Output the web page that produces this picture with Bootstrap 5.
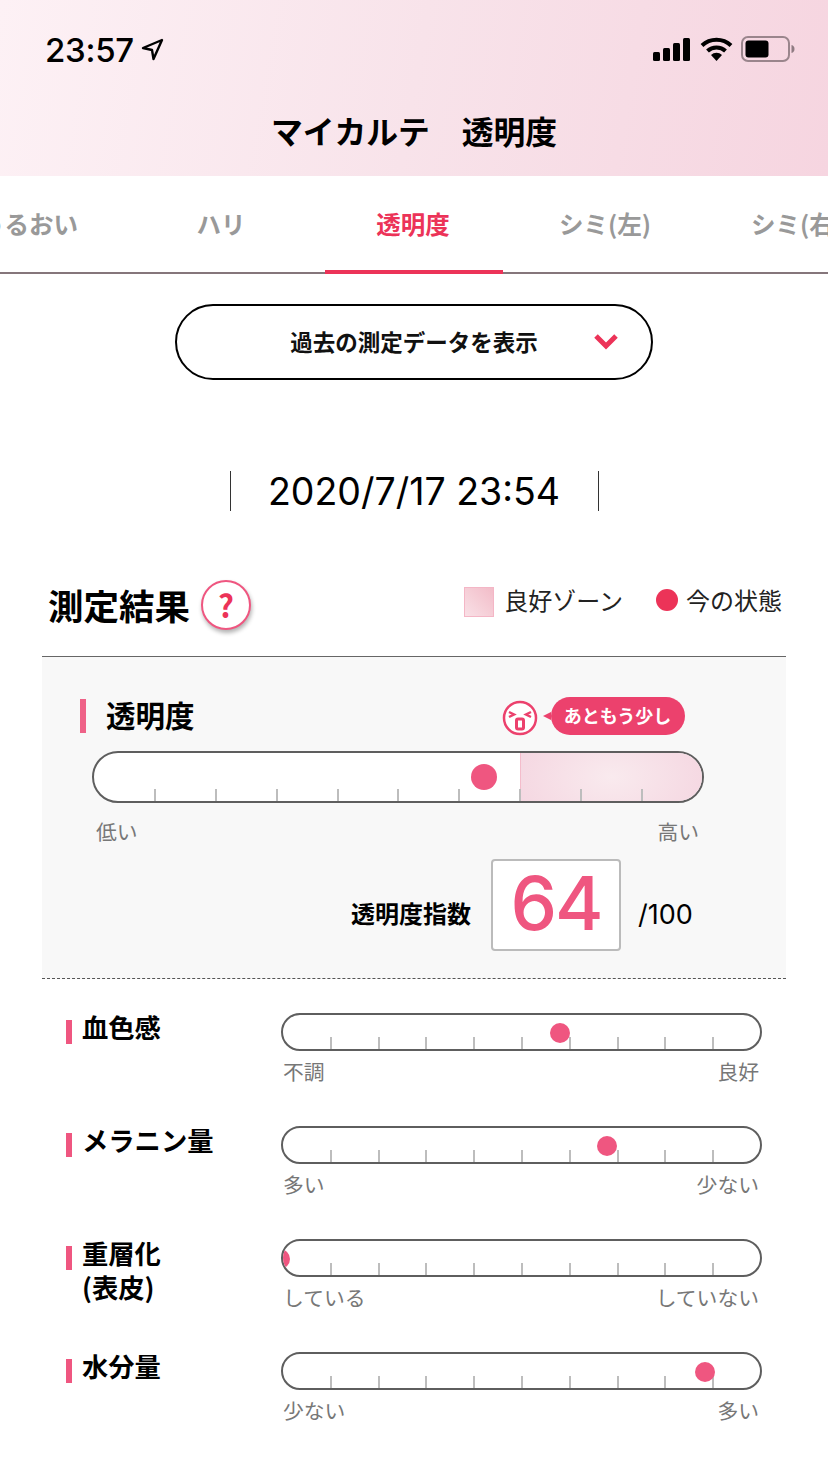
<!DOCTYPE html>
<html lang="ja">
<head>
<meta charset="utf-8">
<title>マイカルテ 透明度</title>
<link href="https://cdn.jsdelivr.net/npm/bootstrap@5.3.0/dist/css/bootstrap.min.css" rel="stylesheet">
<style>
body{font-family:"Noto Sans CJK JP",sans-serif;color:#000;background:#fff;width:828px;overflow-x:hidden}
.hdr{height:176px;background:linear-gradient(100deg,#fdf1f5 0%,#f8e3ea 50%,#f6d5e0 100%)}
.stat{height:88px;padding:0 33px 0 45px}
.clock{font-family:Inter,"Liberation Sans",sans-serif;font-size:33px;font-weight:500;line-height:1;letter-spacing:-.3px;margin-top:12px}
.stat-arrow{margin-top:10px;margin-left:7px}
.wifi{margin-left:9px}
.batt{margin-left:8px}
.hdr-title{font-size:31.800px;font-weight:700;line-height:44px;margin-top:20px}
.tabbar{height:98px;border-bottom:2px solid #85767b;flex-wrap:nowrap;margin-left:-67px;width:1100px}
.tabitem{flex:0 0 192px;height:96px;position:relative;font-size:24.500px;font-weight:700;line-height:95px;color:#999;text-align:center;white-space:nowrap}
.tabitem.on{color:#ec3358}
.tabitem.on::after{content:"";position:absolute;left:8px;right:6px;bottom:-2px;height:4px;background:#ec3358;z-index:2}
.tabs-wrap{overflow:hidden;height:98px}
.pick{width:478px;height:76px;border:2px solid #000;border-radius:38px;background:#fff;font-size:22.500px;font-weight:700;margin:30px auto 0;position:relative;line-height:70px;text-align:center;color:#111}
.pick svg{position:absolute;left:416px;top:27px}
.stamp{width:369px;height:40px;margin:91px auto 0;border-left:1px solid #333;border-right:1px solid #333;font-family:Inter,"Liberation Sans",sans-serif;font-size:37.500px;line-height:42px;text-align:center;white-space:nowrap}
.res-head{height:60px;margin-top:64px;padding:0 46px 0 48px}
.res-title{font-size:35.500px;font-weight:700;line-height:60px}
.qmark{width:50px;height:50px;border:2px solid #ef5680;border-radius:50%;background:#fff;box-shadow:1px 3px 4px rgba(0,0,0,.3);color:#ec3358;font:700 31px/46px "Noto Sans CJK JP",sans-serif;text-align:center;margin-left:11px}
.legend{font-size:24px;line-height:32px;color:#222;margin-top:-10px}
.swatch{width:30px;height:30px;border:1px solid #f4b6c6;background:linear-gradient(45deg,#f9e0e6,#f2bcc8);margin:3px 10px 0 0}
.now{width:22px;height:22px;border-radius:50%;background:#ec3358;margin:5px 8px 0 33px}
.panel{width:744px;height:323px;margin:21px 0 0 42px;background:#f8f8f8;border-top:1px solid #666;border-bottom:1px dashed #555;padding:42px 38px 0;position:relative}
.main-lbl{height:34px;border-left:6px solid #ef6288;padding-left:20px;font-size:29.500px;font-weight:700;line-height:30px;margin-bottom:18px}
.face{margin-left:307px;margin-top:1px}
.bubble{position:relative;margin-left:13px;margin-top:-2px;height:38px;width:134px;border-radius:19px;background:#ec416d;color:#fff;font-size:18px;font-weight:700;line-height:37px;text-align:center;white-space:nowrap}
.bubble::before{content:"";position:absolute;left:-8px;top:15px;border-style:solid;border-color:transparent #ec416d transparent transparent;border-width:4px 8px 4px 0}
.gauge{position:relative;background:#fff;border:2px solid #5e5e5e;overflow:hidden}
.gauge.big{width:612px;height:52px;border-radius:26px;margin-left:12px}
.gauge.sm{width:481px;height:38px;border-radius:19px}
.ticks{position:absolute;left:1px;right:0;bottom:0;display:flex;justify-content:space-evenly;align-items:flex-end}
.ticks i{display:block;width:2px;height:12px;background:#bdbdbd}
.zone{position:absolute;top:0;bottom:0;left:426px;right:0;border-left:1px solid #f4bccb;background:radial-gradient(ellipse 95px 60px at 50% 50%,#f9eaee 0%,#f5d8e2 100%)}
.pin{position:absolute;border-radius:50%;background:#ef5680;transform:translate(-50%,-50%)}
.big .pin{width:26px;height:26px;top:24px}
.sm .pin{width:20px;height:20px;top:18px}
.ends{font-size:20.800px;line-height:28px;color:#777}
.big-ends{width:603px;margin:14px 0 0 16px}
.score{margin:14px 0 0 271px;height:92px}
.score-lbl{font-size:24px;font-weight:700;line-height:108px;width:140px;white-space:nowrap}
.score-box{width:130px;height:92px;border:2px solid #bbb;border-radius:4px;background:#fff;color:#ef5680;font:500 74px/84px Inter,"Liberation Sans",sans-serif;text-align:center;letter-spacing:-2px}
.score-max{font-family:Inter,"Liberation Sans",sans-serif;font-size:27px;line-height:112px;margin-left:17px;white-space:nowrap}
.rows{padding:34px 0 0 66px}
.rowx{height:113px}
.lbl-col{width:215px;font-size:26.300px;font-weight:700;line-height:34px;display:flex}
.lbl-text{margin-top:-3px}
.lbl-mark{flex:0 0 6px;height:24px;background:#ef5680;margin:7px 10px 0 0}
.ends-sm{width:476px;margin:6px 0 0 2px}
</style>
</head>
<body>
<header class="hdr">
  <div class="stat d-flex align-items-center justify-content-between">
    <div class="d-flex align-items-center">
      <span class="clock">23:57</span>
      <svg class="stat-arrow" width="23" height="23" viewBox="0 0 23 23"><path d="M21 2 2 10l9 2 1.500 9z" fill="none" stroke="#000" stroke-width="2.400" stroke-linejoin="round"/></svg>
    </div>
    <div class="d-flex align-items-center" style="margin-top:10px">
      <svg width="38" height="24" viewBox="0 0 38 24"><rect x="0" y="15" width="7" height="9" rx="1.500"/><rect x="10" y="11" width="7" height="13" rx="1.500"/><rect x="20" y="6" width="7" height="18" rx="1.500"/><rect x="30" y="1" width="7" height="23" rx="1.500"/></svg>
      <svg class="wifi" width="33" height="26" viewBox="0 0 33 26"><path d="M2 9.500a21 21 0 0 1 29 0" fill="none" stroke="#000" stroke-width="4"/><path d="M7.500 15a13 13 0 0 1 18 0" fill="none" stroke="#000" stroke-width="4"/><path d="M11 19a8 8 0 0 1 11 0l-5.500 6z"/></svg>
      <svg class="batt" width="54" height="26" viewBox="0 0 54 26"><rect x="1" y="1" width="47" height="24" rx="6" fill="none" stroke="#9a858c" stroke-width="2"/><rect x="4.500" y="4.500" width="23" height="17" rx="3"/><path d="M50.500 9c2 .5 3 2 3 4s-1 3.500-3 4z" fill="#8f7b82"/></svg>
    </div>
  </div>
  <h1 class="hdr-title text-center mb-0">マイカルテ　透明度</h1>
</header>

<div class="tabs-wrap">
  <nav class="tabbar d-flex">
    <div class="tabitem">うるおい</div>
    <div class="tabitem">ハリ</div>
    <div class="tabitem on">透明度</div>
    <div class="tabitem">シミ(左)</div>
    <div class="tabitem">シミ(右)</div>
  </nav>
</div>

<div class="pick">過去の測定データを表示
  <svg width="26" height="18" viewBox="0 0 26 18"><path d="M3 3l10 10L23 3" fill="none" stroke="#ec3358" stroke-width="5"/></svg>
</div>

<div class="stamp">2020/7/17 23:54</div>

<div class="res-head d-flex justify-content-between align-items-center">
  <div class="d-flex align-items-center">
    <h2 class="res-title mb-0">測定結果</h2>
    <div class="qmark">?</div>
  </div>
  <div class="legend d-flex align-items-start">
    <span class="swatch"></span><span>良好ゾーン</span>
    <span class="now"></span><span>今の状態</span>
  </div>
</div>

<section class="panel">
  <div class="d-flex align-items-start">
    <div class="main-lbl">透明度</div>
    <svg class="face" width="36" height="36" viewBox="0 0 36 36">
      <circle cx="18" cy="18" r="16" fill="#fff" stroke="#ec416d" stroke-width="2.500"/>
      <path d="M7 12l5 2.500-5 2.500M29 12l-5 2.500 5 2.500" fill="none" stroke="#ec416d" stroke-width="2.500"/>
      <rect x="14.500" y="19" width="7" height="10" rx="1.500" fill="#fff" stroke="#ec416d" stroke-width="3"/>
    </svg>
    <div class="bubble">あともう少し</div>
  </div>
  <div class="gauge big">
    <div class="zone"></div>
    <div class="ticks"><i></i><i></i><i></i><i></i><i></i><i></i><i></i><i></i><i></i></div>
    <div class="pin" style="left:64.200%"></div>
  </div>
  <div class="ends big-ends d-flex justify-content-between"><span>低い</span><span>高い</span></div>
  <div class="score d-flex">
    <div class="score-lbl">透明度指数</div>
    <div class="score-box">64</div>
    <div class="score-max">/100</div>
  </div>
</section>

<section class="rows">
  <div class="rowx d-flex">
    <div class="lbl-col"><span class="lbl-mark"></span><span class="lbl-text">血色感</span></div>
    <div>
      <div class="gauge sm"><div class="ticks"><i></i><i></i><i></i><i></i><i></i><i></i><i></i><i></i><i></i></div><div class="pin" style="left:58%"></div></div>
      <div class="ends ends-sm d-flex justify-content-between"><span>不調</span><span>良好</span></div>
    </div>
  </div>
  <div class="rowx d-flex">
    <div class="lbl-col"><span class="lbl-mark"></span><span class="lbl-text">メラニン量</span></div>
    <div>
      <div class="gauge sm"><div class="ticks"><i></i><i></i><i></i><i></i><i></i><i></i><i></i><i></i><i></i></div><div class="pin" style="left:68%"></div></div>
      <div class="ends ends-sm d-flex justify-content-between"><span>多い</span><span>少ない</span></div>
    </div>
  </div>
  <div class="rowx d-flex">
    <div class="lbl-col"><span class="lbl-mark"></span><span class="lbl-text">重層化<br>(表皮)</span></div>
    <div>
      <div class="gauge sm"><div class="ticks"><i></i><i></i><i></i><i></i><i></i><i></i><i></i><i></i><i></i></div><div class="pin" style="left:-0.600%"></div></div>
      <div class="ends ends-sm d-flex justify-content-between"><span>している</span><span>していない</span></div>
    </div>
  </div>
  <div class="rowx d-flex">
    <div class="lbl-col"><span class="lbl-mark"></span><span class="lbl-text">水分量</span></div>
    <div>
      <div class="gauge sm"><div class="ticks"><i></i><i></i><i></i><i></i><i></i><i></i><i></i><i></i><i></i></div><div class="pin" style="left:88.400%"></div></div>
      <div class="ends ends-sm d-flex justify-content-between"><span>少ない</span><span>多い</span></div>
    </div>
  </div>
</section>
<script src="https://cdn.jsdelivr.net/npm/bootstrap@5.3.0/dist/js/bootstrap.bundle.min.js"></script>
</body>
</html>
